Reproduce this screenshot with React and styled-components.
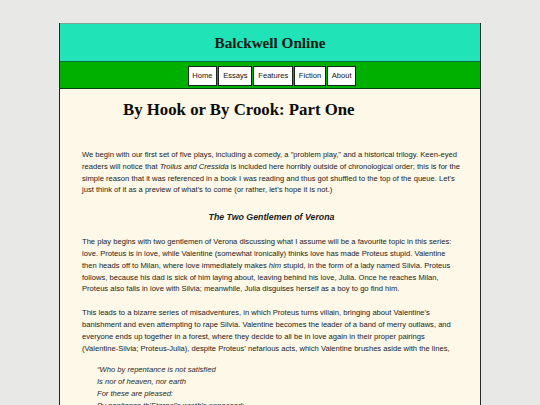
import React from 'react'
import styled, { createGlobalStyle } from 'styled-components'

const GlobalStyle = createGlobalStyle`
    html, body {
        margin: 0;
        padding: 0;
        background: #e8e8e6;
    }
    body {
        font-family: "Liberation Sans", Arial, sans-serif;
    }
`

const navItems = ['Home', 'Essays', 'Features', 'Fiction', 'About']

const quoteLines = [
    '\u201cWho by repentance is not satisfied',
    'Is nor of heaven, nor earth',
    'For these are pleased:',
    'By penitence th\u2019Eternal\u2019s wrath\u2019s appeased:',
]

function App(){
    return(
        <Page>
            <GlobalStyle/>
            <Wrapper>
                <Header>
                    <SiteTitle>Balckwell Online</SiteTitle>
                </Header>
                <NavBar>
                    {navItems.map(item => (
                        <NavButton key={item} href="#">{item}</NavButton>
                    ))}
                </NavBar>
                <Content>
                    <PostTitle>By Hook or By Crook: Part One</PostTitle>
                    <Para>
                        We begin with our first set of five plays, including a comedy, a "problem play," and a historical trilogy. Keen-eyed readers will notice that <em>Troilus and Cressida</em> is included here horribly outside of chronological order; this is for the simple reason that it was referenced in a book I was reading and thus got shuffled to the top of the queue. Let's just think of it as a preview of what's to come (or rather, let's hope it is not.)
                    </Para>
                    <PlayTitle>The Two Gentlemen of Verona</PlayTitle>
                    <Para>
                        The play begins with two gentlemen of Verona discussing what I assume will be a favourite topic in this series: love. Proteus is in love, while Valentine (somewhat ironically) thinks love has made Proteus stupid. Valentine then heads off to Milan, where love immediately makes <em>him</em> stupid, in the form of a lady named Silvia. Proteus follows, because his dad is sick of him laying about, leaving behind his love, Julia. Once he reaches Milan, Proteus also falls in love with Silvia; meanwhile, Julia disguises herself as a boy to go find him.
                    </Para>
                    <Para>
                        This leads to a bizarre series of misadventures, in which Proteus turns villain, bringing about Valentine's banishment and even attempting to rape Silvia. Valentine becomes the leader of a band of merry outlaws, and everyone ends up together in a forest, where they decide to all be in love again in their proper pairings (Valentine-Silvia; Proteus-Julia), despite Proteus' nefarious acts, which Valentine brushes aside with the lines,
                    </Para>
                    <Quote>
                        {quoteLines.map(line => (
                            <QuoteLine key={line}>{line}</QuoteLine>
                        ))}
                    </Quote>
                </Content>
            </Wrapper>
        </Page>
    )
}

export default App

const Page = styled.div`
    padding-top: 23px;
    height: 382px;
    overflow: hidden;
`

const Wrapper = styled.div`
    width: 420px;
    margin: 0 auto;
    border-left: 1px solid #1e2a22;
    border-right: 1px solid #1e2a22;
`

const Header = styled.header`
    background: #20e3b8;
    border-top: 1px solid #7ea596;
    border-bottom: 1px solid #0c6a3c;
    height: 37px;
    display: flex;
    align-items: center;
    justify-content: center;
`

const SiteTitle = styled.h1`
    margin: 0;
    font-family: "Liberation Serif", "Times New Roman", serif;
    font-size: 15.2px;
    font-weight: bold;
    color: #0d1a14;
    line-height: 18px;
    padding-top: 1px;
`

const NavBar = styled.nav`
    background: #00b000;
    border-bottom: 1px solid #0b3d10;
    height: 27px;
    padding-top: 4px;
    box-sizing: border-box;
    display: flex;
    justify-content: center;
    align-items: flex-start;
    gap: 1px;
    padding-left: 4px;
`

const NavButton = styled.a`
    display: block;
    background: #fff;
    border: 1px solid #1b241c;
    padding: 4px 3.8px;
    font-size: 7.6px;
    line-height: 10px;
    color: #111;
    text-decoration: none;
`

const Content = styled.main`
    background: #fdf8e7;
    padding: 11px 19px 20px 22px;
`

const PostTitle = styled.h2`
    margin: 0 0 29px 41px;
    font-family: "Liberation Serif", "Times New Roman", serif;
    font-size: 16.8px;
    line-height: 20px;
    font-weight: bold;
    color: #0c0c0c;
`

const Para = styled.p`
    margin: 0 0 12px;
    font-size: 7.6px;
    line-height: 11.8px;
    color: #222;

    em {
        font-style: italic;
    }
`

const PlayTitle = styled.h3`
    margin: 15px 0 13px;
    text-align: center;
    font-size: 8.8px;
    line-height: 12px;
    font-style: italic;
    font-weight: bold;
    color: #1a1a1a;
`

const Quote = styled.blockquote`
    margin: -2px 0 0 15px;
    font-style: italic;
    font-size: 7.6px;
    line-height: 12px;
    color: #2a2a2a;
`

const QuoteLine = styled.div``
